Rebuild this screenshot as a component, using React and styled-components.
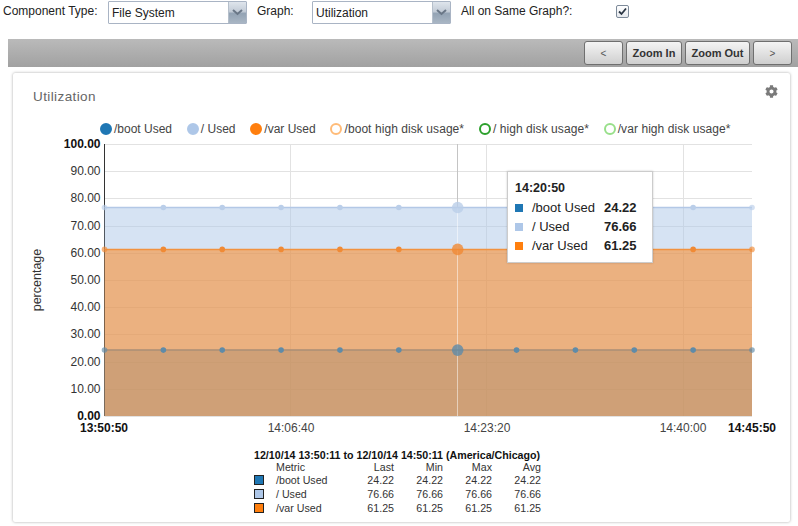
import React from "react";
import styled, { createGlobalStyle } from "styled-components";
import { FaCog } from "react-icons/fa";

const GlobalStyle = createGlobalStyle`
  html, body {
    margin: 0;
    padding: 0;
    background: #fff;
    font-family: "Liberation Sans", Arial, sans-serif;
    color: #222;
  }
`;

const series = [
  { name: "/boot Used", color: "#1f77b4", line: "#a88e76", point: "#5f8ba8", value: 24.22 },
  { name: "/ Used", color: "#aec7e8", line: "#b3c8e6", point: "#bacee9", value: 76.66 },
  { name: "/var Used", color: "#ff7f0e", line: "#f2923f", point: "#f08a35", value: 61.25 },
];

const legendItems = [
  { label: "/boot Used", color: "#1f77b4", filled: true },
  { label: "/ Used", color: "#aec7e8", filled: true },
  { label: "/var Used", color: "#ff7f0e", filled: true },
  { label: "/boot high disk usage*", color: "#ffbb78" },
  { label: "/ high disk usage*", color: "#2ca02c" },
  { label: "/var high disk usage*", color: "#98df8a" },
];

const yTicks = [100, 90, 80, 70, 60, 50, 40, 30, 20, 10, 0];
const xTicks = [
  { x: 104, label: "13:50:50", bold: true },
  { x: 291, label: "14:06:40" },
  { x: 487, label: "14:23:20" },
  { x: 683, label: "14:40:00" },
  { x: 752, label: "14:45:50", bold: true },
];
const vLines = [290.5, 486.5, 683.5];

const X0 = 104.5;
const X1 = 752;
const Y_TOP = 144;
const Y_BOT = 416;
const HOVER_X = 457.5;

const yFor = (v) => Y_BOT - (v / 100) * (Y_BOT - Y_TOP);
const pointXs = Array.from({ length: 12 }, (_, i) => X0 + (i * (X1 - X0)) / 11);

const Page = styled.div`
  width: 798px;
  height: 526px;
  overflow: hidden;
`;

const FormRow = styled.div`
  display: flex;
  align-items: flex-start;
  height: 39px;
  padding-left: 3px;
  box-sizing: border-box;
  font-size: 12px;
  color: #222;
`;

const FieldLabel = styled.span`
  width: ${(p) => p.$width}px;
  padding-top: 4px;
  line-height: 14px;
  white-space: nowrap;
`;

const Select = styled.div`
  width: ${(p) => p.$width}px;
  height: 23px;
  margin-top: 1px;
  margin-right: ${(p) => p.$gap}px;
  box-sizing: border-box;
  border: 1px solid #a9b4c4;
  border-radius: 1px;
  display: flex;
  background: #fff;
`;

const SelectText = styled.span`
  flex: 1;
  padding: 4px 0 0 3px;
  line-height: 14px;
`;

const SelectArrow = styled.span`
  width: 17px;
  background: linear-gradient(#dfe5ec, #c3ccd7 45%, #93a3b4 55%, #a9b6c4);
  border-left: 1px solid #b5bfcb;
  display: flex;
  align-items: center;
  justify-content: center;
`;

const Check = styled.span`
  width: 11px;
  height: 11px;
  margin-top: 5px;
  border: 1px solid #7d8a99;
  border-radius: 2px;
  background: linear-gradient(#fff, #e6e9ee);
  display: flex;
  align-items: center;
  justify-content: center;
`;

const Band = styled.div`
  margin-left: 8px;
  height: 28px;
  background: linear-gradient(#bababa, #a1a1a1);
  display: flex;
  justify-content: flex-end;
  align-items: flex-start;
  gap: 3px;
  padding: 2px 6px 0 0;
  box-sizing: border-box;
`;

const ZoomButton = styled.button`
  width: ${(p) => p.$width}px;
  height: 24px;
  padding: 0;
  border: 1px solid #6f6f6f;
  border-radius: 3px;
  background: linear-gradient(#f4f4f4, #cfcfcf);
  font-family: "Liberation Sans", Arial, sans-serif;
  font-size: ${(p) => (p.$bold ? 11 : 10)}px;
  font-weight: ${(p) => (p.$bold ? 700 : 400)};
  color: ${(p) => (p.$bold ? "#333" : "#555")};
`;

const Card = styled.div`
  margin: 6px 8px 0 13px;
  height: 449px;
  position: relative;
  background: #fff;
  box-shadow: 0 0 3px rgba(0, 0, 0, 0.35);
  border-radius: 2px;
`;

const CardHeader = styled.div`
  display: flex;
  justify-content: space-between;
  box-sizing: border-box;
  padding: 12px 12px 0 20px;
  height: 47px;
  color: #7a7a7a;
`;

const CardTitle = styled.span`
  font-size: 13.5px;
  line-height: 17px;
  margin-top: 3px;
  color: #666;
  letter-spacing: 0.4px;
`;

const Legend = styled.div`
  display: flex;
  gap: 14.8px;
  padding-left: 87px;
  height: 18px;
  font-size: 12px;
  color: #444;
  align-items: center;
`;

const LegendItem = styled.span`
  display: flex;
  align-items: center;
  gap: 2px;
  white-space: nowrap;
  letter-spacing: ${(p) => (p.$filled ? 0 : 0.07)}px;
`;

const LegendDot = styled.span`
  width: 12px;
  height: 12px;
  border-radius: 50%;
  box-sizing: border-box;
  border: 2px solid ${(p) => p.$color};
  background: ${(p) => (p.$filled ? p.$color : "#fff")};
`;

const ChartWrap = styled.div`
  position: relative;
  height: 311px;
`;

const ChartSvg = styled.svg`
  display: block;
  margin-left: 7px;
  font-family: "Liberation Sans", Arial, sans-serif;
  font-size: 12px;
`;

const Tooltip = styled.div`
  position: absolute;
  left: 494px;
  top: 33px;
  width: 146px;
  height: 92px;
  box-sizing: border-box;
  padding: 8px 7px;
  background: #fff;
  border: 1px solid #ccc;
  box-shadow: 0 0 2px rgba(0, 0, 0, 0.2);
  font-size: 13px;
  color: #222;
`;

const TooltipTime = styled.div`
  font-size: 12.5px;
  font-weight: 700;
  line-height: 16px;
  margin-bottom: 2px;
`;

const TooltipRow = styled.div`
  display: grid;
  grid-template-columns: 17px 72px auto;
  align-items: center;
  height: 19px;
`;

const Swatch = styled.span`
  width: 8px;
  height: 8px;
  background: ${(p) => p.$color};
`;

const Stats = styled.div`
  display: grid;
  grid-template-columns: 12px 79px repeat(4, 49px);
  grid-template-rows: 12px 12px repeat(3, 14px);
  width: 287px;
  margin: 0 0 0 241px;
  font-size: 10.67px;
  line-height: 12px;
  color: #333;
`;

const StatsTitle = styled.div`
  grid-column: 1 / -1;
  font-weight: 700;
  color: #111;
  white-space: nowrap;
`;

const StatsCell = styled.span`
  text-align: ${(p) => (p.$left ? "left" : "right")};
  padding-left: ${(p) => (p.$left ? "10px" : "0")};
  line-height: ${(p) => (p.$row ? 14 : 12)}px;
`;

const StatsBox = styled.span`
  width: 8px;
  height: 8px;
  margin-top: 2px;
  border: 1px solid #222;
  background: ${(p) => p.$color};
`;

const Chevron = () => (
  <svg width="11" height="7" viewBox="0 0 11 7">
    <path d="M1 1l4.5 4L10 1" fill="none" stroke="#6a7787" strokeWidth="2" />
  </svg>
);

const Tick = () => (
  <svg width="9" height="9" viewBox="0 0 9 9">
    <path d="M1 4.5l2.5 2.5L8 1.5" fill="none" stroke="#2b3644" strokeWidth="1.8" />
  </svg>
);

const Chart = () => (
  <ChartSvg width="770" height="311" viewBox="20 138 770 311">
    {yTicks.map((t) => (
      <line key={t} x1={X0} x2={X1} y1={Math.round(yFor(t)) + 0.5} y2={Math.round(yFor(t)) + 0.5} stroke="#e2e2e2" />
    ))}
    {vLines.map((x) => (
      <line key={x} x1={x} x2={x} y1={Y_TOP} y2={Y_BOT} stroke="#e2e2e2" />
    ))}
    <line x1={X0} x2={X0} y1={Y_TOP} y2={Y_BOT} stroke="#333" />
    <line x1={HOVER_X} x2={HOVER_X} y1={Y_TOP} y2={yFor(76.66)} stroke="#c4c4c4" />
    {series.map((s) => (
      <rect key={s.name} x={X0} y={yFor(s.value)} width={X1 - X0} height={Y_BOT - yFor(s.value)} fill={s.color} fillOpacity="0.5" />
    ))}
    <line x1={HOVER_X} x2={HOVER_X} y1={yFor(76.66)} y2={Y_BOT} stroke="#fff" strokeOpacity="0.5" />
    {series.map((s) => (
      <g key={s.name}>
        <line x1={X0} x2={X1} y1={yFor(s.value)} y2={yFor(s.value)} stroke={s.line} strokeWidth="1.5" />
        {pointXs.map((x, i) => (
          <circle
            key={i}
            cx={x}
            cy={yFor(s.value)}
            r={i === 6 ? 5.8 : 2.8}
            fill={s.point}
            fillOpacity={i === 0 || i === 11 ? 0.65 : i === 6 ? 0.8 : 1}
          />
        ))}
      </g>
    ))}
    {yTicks.map((t) => (
      <text
        key={t}
        x="100.5"
        y={yFor(t) + 4}
        textAnchor="end"
        fill={t === 100 || t === 0 ? "#111" : "#333"}
        fontWeight={t === 100 || t === 0 ? 700 : 400}
      >
        {t.toFixed(2)}
      </text>
    ))}
    {xTicks.map((t) => (
      <text key={t.label} x={t.x} y="432" textAnchor="middle" fill={t.bold ? "#111" : "#444"} fontWeight={t.bold ? 700 : 400}>
        {t.label}
      </text>
    ))}
    <text x="41" y="280" textAnchor="middle" fill="#333" fontSize="12.5" transform="rotate(-90 41 280)">
      percentage
    </text>
  </ChartSvg>
);

const App = () => (
  <Page>
    <GlobalStyle />
    <FormRow>
      <FieldLabel $width={105}>Component Type:</FieldLabel>
      <Select $width={139} $gap={10}>
        <SelectText>File System</SelectText>
        <SelectArrow><Chevron /></SelectArrow>
      </Select>
      <FieldLabel $width={55}>Graph:</FieldLabel>
      <Select $width={139} $gap={10}>
        <SelectText>Utilization</SelectText>
        <SelectArrow><Chevron /></SelectArrow>
      </Select>
      <FieldLabel $width={155}>All on Same Graph?:</FieldLabel>
      <Check><Tick /></Check>
    </FormRow>
    <Band>
      <ZoomButton $width={39}>&lt;</ZoomButton>
      <ZoomButton $width={56} $bold>Zoom In</ZoomButton>
      <ZoomButton $width={65} $bold>Zoom Out</ZoomButton>
      <ZoomButton $width={39}>&gt;</ZoomButton>
    </Band>
    <Card>
      <CardHeader>
        <CardTitle>Utilization</CardTitle>
        <FaCog size={13} />
      </CardHeader>
      <Legend>
        {legendItems.map((l) => (
          <LegendItem key={l.label} $filled={l.filled}>
            <LegendDot $color={l.color} $filled={l.filled} />
            {l.label}
          </LegendItem>
        ))}
      </Legend>
      <ChartWrap>
        <Chart />
        <Tooltip>
          <TooltipTime>14:20:50</TooltipTime>
          {series.map((s) => (
            <TooltipRow key={s.name}>
              <Swatch $color={s.color} />
              <span>{s.name}</span>
              <b>{s.value}</b>
            </TooltipRow>
          ))}
        </Tooltip>
      </ChartWrap>
      <Stats>
        <StatsTitle>12/10/14 13:50:11 to 12/10/14 14:50:11 (America/Chicago)</StatsTitle>
        <span />
        <StatsCell $left>Metric</StatsCell>
        <StatsCell>Last</StatsCell>
        <StatsCell>Min</StatsCell>
        <StatsCell>Max</StatsCell>
        <StatsCell>Avg</StatsCell>
        {series.map((s) => (
          <React.Fragment key={s.name}>
            <StatsBox $color={s.color} />
            <StatsCell $left $row>{s.name}</StatsCell>
            <StatsCell $row>{s.value}</StatsCell>
            <StatsCell $row>{s.value}</StatsCell>
            <StatsCell $row>{s.value}</StatsCell>
            <StatsCell $row>{s.value}</StatsCell>
          </React.Fragment>
        ))}
      </Stats>
    </Card>
  </Page>
);

export default App;
